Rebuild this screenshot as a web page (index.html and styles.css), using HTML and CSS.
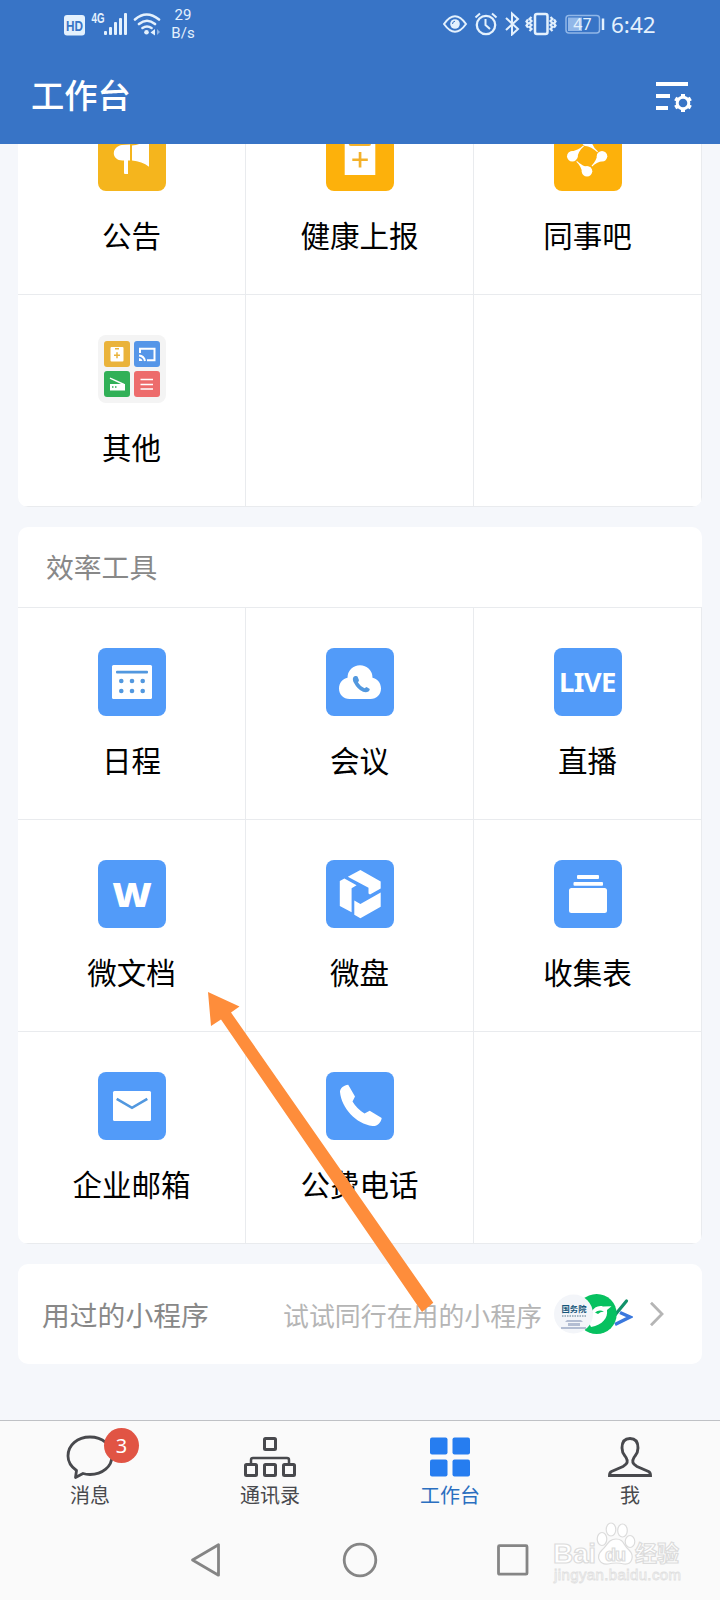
FILE: index.html
```html
<!DOCTYPE html>
<html lang="zh-CN">
<head>
<meta charset="utf-8">
<title>工作台</title>
<link rel="stylesheet" href="styles.css">
</head>
<body>
<div class="screen">
  <header class="header">
    <div class="status">
      <svg class="status-left" width="100" height="26" viewBox="0 0 100 26" fill="#e4f1fd">
        <rect x="0" y="5" width="21" height="20.500" rx="3"/>
        <text class="hd" x="2" y="20.500" textLength="17" lengthAdjust="spacingAndGlyphs">HD</text>
        <text class="net" x="27.500" y="13" textLength="13" lengthAdjust="spacingAndGlyphs">4G</text>
        <rect x="40" y="21" width="3" height="4" rx="1"/><rect x="45" y="17" width="3" height="8" rx="1"/><rect x="50" y="12" width="3" height="13" rx="1"/><rect x="55" y="8" width="3" height="17" rx="1"/><rect x="60" y="3" width="3" height="22" rx="1"/>
        <g fill="none" stroke="#e4f1fd" stroke-width="2.600" stroke-linecap="round"><path d="M71 9.500q11.500-10 24 0M75 14q8-6.500 16 0M78.500 18q4.500-3 9 0"/></g>
        <circle cx="82.500" cy="22.300" r="2.300"/><path d="M86.500 22.500l4.500-3.500v6.500z"/><path d="M96 22l-3-3v6z" opacity=".5"/>
      </svg>
      <div class="speed">29<br>B/s</div>
      <svg class="status-right" width="162" height="26" viewBox="0 0 162 26" fill="none" stroke="#e4f1fd" stroke-width="2">
        <path d="M1 14q11-15.500 22 0q-11 15.500-22 0z"/><circle cx="12" cy="14" r="4.800" fill="#e4f1fd" stroke="none"/><path d="M9.500 14q0-2.500 2.500-2.800" stroke="#3874c6" stroke-width="1"/>
        <circle cx="43" cy="15" r="9.200" stroke-width="2.300"/><path d="M42.500 9v6l4.500 4M32.500 7.500l4.500-4M53.500 7.500l-4.500-4"/>
        <path d="M63 8l12 11-6 5.500V3.500l6 5.500L63 20" stroke-width="2"/>
        <rect x="92" y="4" width="12.500" height="20" rx="2" stroke-width="2.500"/><path d="M88.500 7l-2 2 2 2-2 2 2 2-2 2 2 2-2 2M85 9.500l-1.500 2 1.500 2-1.500 2 1.500 2M107.500 7l2 2-2 2 2 2-2 2 2 2-2 2 2 2M111 9.500l1.500 2-1.500 2 1.500 2-1.500 2" stroke-width="2.200"/>
        <rect x="123" y="5.500" width="33.500" height="17.500" rx="3" stroke="#91b7e8" stroke-width="1.500"/><rect x="125" y="7.500" width="14" height="13.500" fill="#91b7e8" stroke="none"/><path d="M160 8.500v11.500" stroke-width="2.500"/>
        <text class="battery" x="139.500" y="20" text-anchor="middle">47</text>
      </svg>
      <time class="clock">6:42</time>
    </div>
    <div class="titlebar">
      <h1 class="title">工作台</h1>
      <svg width="38" height="32" viewBox="0 0 38 32" fill="#fff">
        <path d="M0 1h32v4H0zM0 13h14v4H0zM0 25h12v4H0z"/>
        <circle cx="27" cy="22" r="5.800" fill="none" stroke="#fff" stroke-width="3"/>
        <g stroke="#fff" stroke-width="4"><path d="M27 13v3M27 28v3M19.200 17.500l2.600 1.500M32.200 25l2.600 1.500M19.200 26.500l2.600-1.500M32.200 19l2.600-1.500"/></g>
      </svg>
    </div>
  </header>

  <main class="content">
    <section class="card card-scrolled">
      <div class="grid">
        <div class="cell"><svg class="tile gold" viewBox="0 0 68 68"><path d="M32 21.500V37.500H24.500C19 37.500 15.800 34 15.800 30.500C15.800 26 19.500 22.500 24 22zM26 36.500h4V51H27q-1 0-1-1zM34 22.500Q42 22 45.500 18H51V43.700Q44 38.500 34 37.500z"/></svg><span class="label">公告</span></div>
        <div class="cell"><svg class="tile amber" viewBox="0 0 68 68"><path d="M18.700 15h30.600v37H18.700z"/><path class="cut-amber" d="M22.700 15H45v6q0 2-2 2H24.700q-2 0-2-2zM32.700 29h2.700v6.400h6.400v2.700h-6.400v6.400h-2.700v-6.400h-6.400v-2.700h6.400z"/></svg><span class="label">健康上报</span></div>
        <div class="cell"><svg class="tile amber" viewBox="0 0 68 68"><circle cx="18.300" cy="33.300" r="5.300"/><circle cx="48" cy="33.300" r="5.300"/><circle cx="33" cy="48.300" r="5.300"/><circle cx="33" cy="18" r="5.300"/><path d="M14.800 29.300Q25 27 29.300 22.500L30 23.200Q24 28 23 36zM29 51.700Q27 42.500 22.300 38.700L23 38Q28 43.500 37 44.800zM51.500 37.300Q42 39 38.200 43.500L37.500 42.800Q43 37 43.500 30.500zM36.500 14.500Q38.500 25 44 28.500L43.300 29.300Q38 24 29.500 22z"/></svg><span class="label">同事吧</span></div>
        <div class="cell"><svg class="tile folder" viewBox="0 0 68 68">
          <rect x="6" y="6" width="26" height="26" rx="3" fill="#eab33b"/><rect x="36" y="6" width="26" height="26" rx="3" fill="#5596e8"/><rect x="6" y="36" width="26" height="26" rx="3" fill="#31b057"/><rect x="36" y="36" width="26" height="26" rx="3" fill="#ed6c6c"/>
          <rect x="12.500" y="12" width="13" height="14.500" rx="1"/><path d="M17 13.800h4M16 20.200h6M19 17.200v6" stroke="#eab33b" stroke-width="1.500"/>
          <path d="M42 18v-4.300h14.500v11.600h-7.500M41 20.500q5 .5 6 5.500" fill="none" stroke="#fff" stroke-width="2"/><path d="M41 23q3 .5 3.500 3H41z"/>
          <path d="M12 49h15v6.500H12z"/><path d="M12 43.200L26 49.500" stroke="#fff" stroke-width="1.400"/><path d="M14 52h1.500m1.500 0h1.500" stroke="#31b057" stroke-width="1.500"/>
          <path d="M42.500 44.500h12.500M42.500 49.500h12.500M42.500 54h12.500" stroke="#fff" stroke-width="1.500"/></svg><span class="label">其他</span></div>
        <div class="cell"></div>
        <div class="cell"></div>
      </div>
    </section>

    <section class="card">
      <h2 class="section-title">效率工具</h2>
      <div class="grid">
        <div class="cell"><svg class="tile blue" viewBox="0 0 68 68"><rect x="14" y="17" width="40" height="34" rx="1.500"/><g class="cut-blue"><rect x="18" y="22.800" width="32" height="2.600" rx="1"/><circle cx="23.300" cy="33" r="2.300"/><circle cx="34" cy="33" r="2.300"/><circle cx="44.700" cy="33" r="2.300"/><circle cx="23.300" cy="43" r="2.300"/><circle cx="34" cy="43" r="2.300"/><circle cx="44.700" cy="43" r="2.300"/></g></svg><span class="label">日程</span></div>
        <div class="cell"><svg class="tile blue" viewBox="0 0 68 68"><path d="M23.500 51C17.500 51 13 46.500 13 40.500C13 34.500 17 30.500 21.500 29.700A12.500 12.500 0 0 1 46.500 29.700C51 30.500 55 34.500 55 40.500C55 46.500 50.500 51 44.500 51z"/><path class="cut-blue" d="M29.500 28C26.500 28.500 26.300 31.500 27.800 34.500Q31.500 41.500 37 43.800C40.500 45 43.500 43.800 43.800 41L40.500 39L38.500 40.200Q34 38 32 34.500L33 32.300L31.500 28.500Q30.800 27.700 29.500 28z"/></svg><span class="label">会议</span></div>
        <div class="cell"><svg class="tile blue" viewBox="0 0 68 68"><text class="live" x="5" y="43.700" textLength="57.500">LIVE</text></svg><span class="label">直播</span></div>
        <div class="cell"><svg class="tile blue" viewBox="0 0 68 68"><text class="word" x="14.200" y="46.800" textLength="39.600" lengthAdjust="spacingAndGlyphs">W</text></svg><span class="label">微文档</span></div>
        <div class="cell"><svg class="tile blue" viewBox="0 0 68 68"><path d="M34.400 10L54.700 21.500V28.500L44 34.500L42.500 33.500V27.800L21.800 16.700zM18.400 18.500L30.600 25.300L25.600 28.300V52.300L13.800 46V21zM28.300 40.500L34.400 44L54.700 32.500V46.700L34.400 58.300L28.300 54.800z"/></svg><span class="label">微盘</span></div>
        <div class="cell"><svg class="tile blue" viewBox="0 0 68 68"><rect x="23" y="15" width="22" height="4" rx="1"/><rect x="19.500" y="22" width="29.500" height="3.800" rx="1"/><rect x="15" y="28" width="38" height="25" rx="2.500"/></svg><span class="label">收集表</span></div>
        <div class="cell"><svg class="tile blue" viewBox="0 0 68 68"><rect x="15" y="19" width="38" height="30" rx="1.500"/><path d="M18.700 26.800L34 35.800L49.300 26.800" fill="none" stroke="#5298df" stroke-width="2.600"/></svg><span class="label">企业邮箱</span></div>
        <div class="cell"><svg class="tile blue" viewBox="0 0 68 68"><path d="M22.200 12.700C18 13 14 16 14 20C15.500 36 30 52 46.500 54C51 54.500 55 51 55.700 46L43.700 38.800L38.500 41.500Q31 37 26.500 29.500L29 24.500z"/></svg><span class="label">公费电话</span></div>
        <div class="cell"></div>
      </div>
    </section>

    <section class="card mini">
      <span class="mini-title">用过的小程序</span>
      <span class="mini-hint">试试同行在用的小程序</span>
      <svg class="mini-logos" width="80" height="44" viewBox="0 0 80 44">
        <path d="M62 23L73.500 9" fill="none" stroke="#12926a" stroke-width="3.200" stroke-linecap="round"/><path d="M67 20.500L77 25L62 32.500" fill="none" stroke="#3a78dd" stroke-width="3.400"/>
        <circle cx="43.700" cy="22" r="20" fill="#07c160"/>
        <path d="M38 20.500C41 15 46 13 50 14.500L58.500 14.200L54 18C55 26 50 32.500 38 35L36 31C34 28 36 22 40 20.500z" fill="#fff"/>
        <path d="M42 20.500Q46 17 51 19.500Q47 19.500 45 22z" fill="#07c160"/>
        <circle cx="20.500" cy="22" r="19.500" fill="#f3f5f9"/>
        <text class="council" x="8.500" y="20" textLength="25">国务院</text><path d="M9 24h25" stroke="#54788d" stroke-width="1.200" stroke-dasharray="1.500 1"/>
        <path d="M14 28h14l2 2H12zM15 31h12v3H15zM8 35h25v2H8z" fill="#b3bdd2"/>
      </svg>
      <svg width="16" height="28" viewBox="0 0 16 28"><path d="M2 2.700L13 14L2 25.300" fill="none" stroke="#b5b5b5" stroke-width="2.800"/></svg>
    </section>
  </main>

  <footer class="footer">
    <nav class="tabs">
      <div class="tab"><div class="tab-icon"><svg width="52" height="48" viewBox="0 0 52 48"><path d="M26 4C13.500 4 4 12 4 23C4 29 7.500 34 12.500 37.500L11.500 44.500L19 40.500Q22 41.500 26 41.500C38.500 41.500 48 33.500 48 23C48 12 38.500 4 26 4z" fill="none" stroke="#48494d" stroke-width="2.800" stroke-linejoin="round"/></svg><span class="badge">3</span></div><span class="tab-label">消息</span></div>
      <div class="tab"><div class="tab-icon"><svg width="52" height="48" viewBox="0 0 52 48"><g fill="none" stroke="#48494d" stroke-width="3"><rect x="20.500" y="5.500" width="11" height="11" rx="1"/><rect x="1.500" y="31.500" width="11" height="11" rx="1"/><rect x="20.500" y="31.500" width="11" height="11" rx="1"/><rect x="39.500" y="31.500" width="11" height="11" rx="1"/><path d="M7 31v-4q0-2 2-2h34q2 0 2 2v4" stroke-width="2.500"/></g></svg></div><span class="tab-label">通讯录</span></div>
      <div class="tab active"><div class="tab-icon"><svg width="52" height="48" viewBox="0 0 52 48"><g fill="#267df0"><rect x="6" y="4.500" width="17.500" height="17" rx="2"/><rect x="28.500" y="4.500" width="17.500" height="17" rx="2"/><rect x="6" y="26.500" width="17.500" height="17" rx="2"/><rect x="28.500" y="26.500" width="17.500" height="17" rx="2"/></g></svg></div><span class="tab-label">工作台</span></div>
      <div class="tab"><div class="tab-icon"><svg width="52" height="48" viewBox="0 0 52 48"><path d="M26 5.500C20.500 5.500 18 9.500 18 15C18 20 19.500 21 22 24.500C24.500 28.500 23.500 31 19 33.500L7.500 38.500Q5.500 39.500 5.500 42.500H46.500Q46.500 39.500 44.500 38.500L33 33.500C28.500 31 27.500 28.500 30 24.500C32.500 21 34 20 34 15C34 9.500 31.500 5.500 26 5.500z" fill="none" stroke="#48494d" stroke-width="2.900"/></svg></div><span class="tab-label">我</span></div>
    </nav>
    <div class="sysnav">
      <svg width="34" height="38" viewBox="0 0 34 38"><path d="M3.500 19L29.500 3.800V34.200z"/></svg>
      <svg width="38" height="38" viewBox="0 0 38 38"><circle cx="19" cy="19" r="15.800"/></svg>
      <svg width="34" height="38" viewBox="0 0 34 38"><rect x="2.500" y="4.700" width="28.500" height="28.500" rx="1"/></svg>
    </div>
  </footer>

  <svg class="arrow" width="228" height="324" viewBox="208 991 228 324"><path d="M208 992L239.500 1006.500L231 1012.500L433.300 1302.700L422 1312L221 1019.500L211 1026z" fill="#fe8d3b"/></svg>
  <svg class="watermark" width="134" height="64" viewBox="0 0 134 64">
    <g fill="#fff" stroke="#dcdcdc" stroke-width="1.200">
      <text class="wm-brand" x="2" y="41.500" textLength="43">Bai</text>
      <ellipse cx="51" cy="18" rx="4.800" ry="6.500"/><ellipse cx="60" cy="8.500" rx="4.800" ry="6.500"/><ellipse cx="71.500" cy="9.500" rx="4.800" ry="6.500"/><ellipse cx="79" cy="20.500" rx="4.800" ry="6"/>
      <path d="M65 18C57 18 57 24 51 29C44 36 49 44 57 43Q65 41 73 43C81 44 84 35 78 29C72 24 73 18 65 18z"/>
      <text class="wm-du" x="54" y="39.500" textLength="21">du</text>
      <text class="wm-cn" x="84" y="40" textLength="44">经验</text>
    </g>
    <text class="wm-url" x="3" y="58.500" textLength="127">jingyan.baidu.com</text>
  </svg>
</div>
</body>
</html>
```
FILE: styles.css
```css
* { box-sizing: border-box; }
body {
  margin: 0;
  background: #f5f7fb;
  font-family: "KaiTi", "Kaiti SC", "Liberation Sans", "Noto Sans CJK SC", sans-serif;
}
svg { display: block; flex: none; }
.screen {
  position: relative;
  display: flex;
  flex-direction: column;
  width: 720px;
  height: 1600px;
  overflow: hidden;
}

/* Header */
.header { flex: none; height: 144px; background: #3874c6; color: #fff; }
.status {
  display: flex;
  height: 48px;
  padding: 10px 0 0 64px;
  color: #e4f1fd;
}
.speed {
  width: 40px;
  margin: -4px 0 0 -1px;
  font: 15px/18px Roboto, sans-serif;
  text-align: center;
}
.status-right { margin-left: 240px; }
.clock { margin-left: 6px; font: 22.500px/30px "Noto Sans", sans-serif; }
.hd { font: 700 14px "Liberation Sans", sans-serif; fill: #3874c6; }
.net { font: 700 14px "Liberation Sans", sans-serif; }
.battery { font: 16px "Noto Sans", sans-serif; fill: #e4f1fd; stroke: none; }
.titlebar {
  display: flex;
  justify-content: space-between;
  align-items: center;
  height: 96px;
  padding: 2px 26px 0 31px;
}
.title { margin: 0; font-size: 33.300px; line-height: 44px; font-weight: 500; }

/* Cards */
.content { flex: 1; min-height: 0; padding: 0 18px; overflow: hidden; }
.card {
  margin-bottom: 20px;
  overflow: hidden;
  border-radius: 10px;
  background: #fff;
}
.card-scrolled { margin-top: -61px; }
.section-title {
  height: 81px;
  margin: 0;
  padding: 1px 28px 0;
  border-bottom: 1px solid #e9ebee;
  color: #888;
  font-size: 27.800px;
  font-weight: 400;
  line-height: 81px;
}
.grid { display: grid; grid-template-columns: repeat(3, 228px); grid-auto-rows: 212px; }
.cell {
  display: flex;
  flex-direction: column;
  align-items: center;
  padding-top: 40px;
  border-right: 1px solid #e9ebee;
  border-bottom: 1px solid #e9ebee;
}
.tile { width: 68px; height: 68px; border-radius: 8px; fill: #fff; }
.gold { background: #f5b51d; }
.amber { background: #fdb10b; }
.blue { background: #529bf9; }
.folder { background: #f4f4f4; }
.cut-amber { fill: #f3b12a; }
.cut-blue { fill: #5298df; }
.live { font: 700 27.500px "Noto Sans", sans-serif; font-stretch: condensed; }
.word { font: 800 33.500px "Open Sans", sans-serif; }
.label { margin-top: 26px; color: #000; font-size: 29.500px; line-height: 40px; white-space: nowrap; }
.mini {
  display: flex;
  align-items: center;
  height: 100px;
  margin: 0;
  padding: 0 37px 0 24px;
}
.mini-title { color: #888; font-size: 27.800px; }
.mini-hint { margin-left: auto; color: #b5b5b5; font-size: 25.900px; }
.mini-logos { margin: 0 16px 0 11px; }
.council { font: 700 8.300px "Noto Sans CJK SC", sans-serif; fill: #17577a; }

/* Bottom navigation */
.footer { flex: none; height: 180px; border-top: 1px solid #bfc1c5; background: #fafafa; }
.tabs { display: grid; grid-template-columns: repeat(4, 180px); height: 96px; padding-top: 12px; }
.tab { display: flex; flex-direction: column; align-items: center; color: #48494d; }
.tab-icon { position: relative; height: 48px; }
.tab-label { margin-top: 1px; font-size: 20px; line-height: 28px; }
.active { color: #2a6fc0; }
.badge {
  position: absolute;
  top: -5px;
  left: 40px;
  width: 35px;
  height: 35px;
  border-radius: 50%;
  background: #e15444;
  color: #fff;
  font: 20px/35px "Noto Sans", sans-serif;
  text-align: center;
}
.sysnav {
  display: flex;
  justify-content: space-between;
  width: 341px;
  margin: 24px 0 0 189px;
  fill: none;
  stroke: #858585;
  stroke-width: 2.800;
  stroke-linejoin: round;
}

/* Overlays */
.arrow { position: absolute; left: 208px; top: 991px; }
.watermark { position: absolute; left: 551px; top: 1521px; }
.wm-brand { font: 700 28px "Liberation Sans", sans-serif; }
.wm-du { font: 700 18px "Liberation Sans", sans-serif; }
.wm-cn { font: 700 22px "Noto Sans CJK SC", sans-serif; }
.wm-url { font: 15px "Liberation Sans", sans-serif; fill: #fff; stroke: #e0e0e0; stroke-width: .8; }
```
